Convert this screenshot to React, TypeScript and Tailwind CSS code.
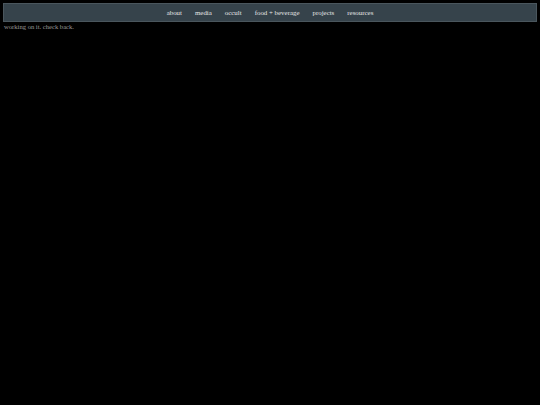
import React from "react";

export default function App() {
  const items = ["about", "media", "occult", "food + beverage", "projects", "resources"];
  return (
    <div className="min-h-[405px] w-full bg-black" style={{ fontFamily: '"Liberation Serif", "Times New Roman", serif' }}>
      <div className="px-[3px] pt-[3px]">
        <nav className="flex h-[19px] items-center justify-center gap-[13px] border border-[#4a565d] bg-[#36434b] pt-[1px] text-[6.9px] text-[#e6e6e6]">
          {items.map((i) => (
            <span key={i}>{i}</span>
          ))}
        </nav>
      </div>
      <p className="px-[4px] text-[6.6px] leading-[9px] text-[#9a9a9a]">working on it. check back.</p>
    </div>
  );
}
